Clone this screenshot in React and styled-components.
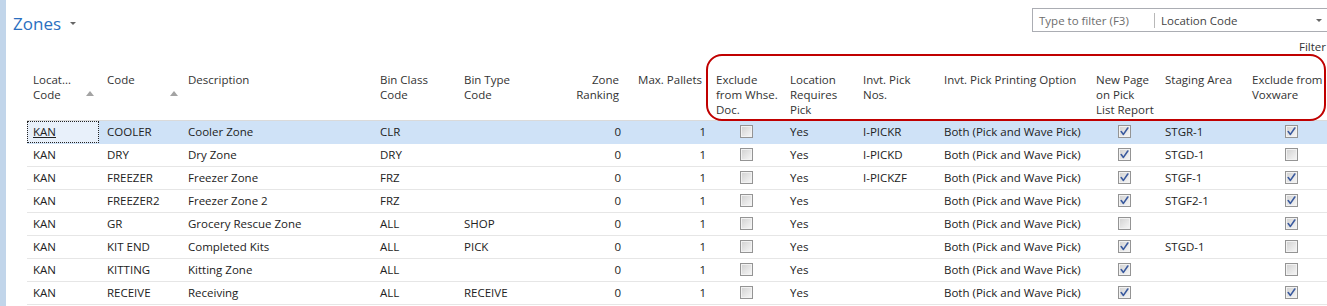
import React from "react";
import styled, { createGlobalStyle } from "styled-components";

const GlobalStyle = createGlobalStyle`
  html, body { margin: 0; padding: 0; background: #fff; }
  body { font-family: "Open Sans", "Noto Sans", Arial, sans-serif; overflow: hidden; }
  * { box-sizing: border-box; }
`;

const COLS = "74px 81px 192px 84px 102px 65px 85px 74px 73px 81px 152px 69px 87px 90px";

const Page = styled.div`
  display: flex;
  width: 1327px;
  height: 306px;
  overflow: hidden;
`;

const Strip = styled.div`
  width: 6px;
  flex: none;
  background: #c1d5ea;
`;

const Main = styled.div`
  position: relative;
  flex: 1;
  min-width: 0;
  overflow: hidden;
`;

const TopBar = styled.div`
  display: flex;
  align-items: flex-start;
  justify-content: space-between;
  height: 40px;
  padding-top: 8px;
`;

const Title = styled.div`
  display: flex;
  align-items: center;
  gap: 9px;
  padding-left: 7px;
  padding-top: 8px;
  height: 24px;
  font-size: 17px;
  color: #2a6fc0;
  line-height: 20px;
`;

const TitleCaret = styled.span`
  width: 0;
  height: 0;
  border-left: 3px solid transparent;
  border-right: 3px solid transparent;
  border-top: 3px solid #666;
  margin-top: -2px;
`;

const FilterBox = styled.div`
  display: flex;
  align-items: center;
  width: 306px;
  height: 24px;
  margin-right: -11px;
  border: 1px solid #abadb3;
  font-size: 11.5px;
`;

const FilterInput = styled.div`
  width: 122px;
  padding-left: 6px;
  color: #6d6d6d;
  border-right: 1px solid #b8b8b8;
  line-height: 15px;
`;

const FilterField = styled.div`
  flex: 1;
  display: flex;
  justify-content: space-between;
  align-items: center;
  padding-left: 6px;
  padding-right: 15px;
  color: #444;
`;

const DropCaret = styled.span`
  width: 0;
  height: 0;
  border-left: 3px solid transparent;
  border-right: 3px solid transparent;
  border-top: 3px solid #666;
`;

const FilterLabelRow = styled.div`
  display: flex;
  justify-content: flex-end;
  height: 14px;
  font-size: 11.5px;
  line-height: 14px;
  color: #333;
  padding-right: 1px;
`;

const Table = styled.div`
  padding-left: 21px;
`;

const HeaderRow = styled.div`
  display: grid;
  grid-template-columns: ${COLS};
  height: 67px;
  padding-top: 18px;
  border-bottom: 1px solid #dadada;
`;

const HeaderCell = styled.div`
  display: flex;
  justify-content: ${(p) => (p.$right ? "flex-end" : "space-between")};
  align-items: flex-start;
  padding: 0 ${(p) => p.$pr ?? 6}px 0 6px;
  font-size: 11.5px;
  line-height: 15px;
  color: #333;
  text-align: ${(p) => (p.$right ? "right" : "left")};
  white-space: pre;
`;

const SortArrow = styled.span`
  width: 0;
  height: 0;
  margin-top: 19px;
  border-left: 4.5px solid transparent;
  border-right: 4.5px solid transparent;
  border-bottom: 5px solid #a3a3a3;
`;

const Row = styled.div`
  display: grid;
  grid-template-columns: ${COLS};
  height: 23px;
  border-bottom: 1px solid ${(p) => (p.$selected ? "#cfe2f7" : "#e6e6e6")};
  background: ${(p) => (p.$selected ? "#cfe2f7" : "#fff")};
`;

const Cell = styled.div`
  display: flex;
  align-items: center;
  justify-content: ${(p) => (p.$right ? "flex-end" : p.$center ? "center" : "flex-start")};
  padding: 0 ${(p) => p.$pr ?? 6}px 1px 6px;
  font-size: 11.5px;
  color: #222;
  white-space: nowrap;
  overflow: hidden;
`;

const FocusCell = styled(Cell)`
  background: #e8f0fa;
  outline: 1px dotted #222;
  outline-offset: -1px;
  margin-right: 2px;
  text-decoration: underline;
`;

const Box = styled.span`
  display: inline-flex;
  align-items: center;
  justify-content: center;
  width: 13px;
  height: 13px;
  border: 1px solid #949494;
  background: linear-gradient(135deg, #d0d0d0 0%, #e6e6e6 55%, #f7f7f7 100%);
  box-shadow: inset 0 0 0 1px #f2f2f2;
  margin-left: ${(p) => p.$dx ?? 0}px;
`;

const Annotation = styled.div`
  position: absolute;
  left: 700px;
  top: 54px;
  width: 620px;
  height: 67px;
  border: 2px solid #c00000;
  border-radius: 16px;
  pointer-events: none;
`;

const Check = ({ on, dx }) => (
  <Box $dx={dx}>
    {on && (
      <svg width="9" height="9" viewBox="0 0 9 9">
        <path d="M1.2 4.6 L3.4 7.4 L7.8 1" fill="none" stroke="#3a5a9e" strokeWidth="1.6" strokeLinecap="round" strokeLinejoin="round" />
      </svg>
    )}
  </Box>
);

const both = "Both (Pick and Wave Pick)";
const rows = [
  ["COOLER", "Cooler Zone", "CLR", "", "I-PICKR", true, "STGR-1", true],
  ["DRY", "Dry Zone", "DRY", "", "I-PICKD", true, "STGD-1", false],
  ["FREEZER", "Freezer Zone", "FRZ", "", "I-PICKZF", true, "STGF-1", true],
  ["FREEZER2", "Freezer Zone 2", "FRZ", "", "", true, "STGF2-1", true],
  ["GR", "Grocery Rescue Zone", "ALL", "SHOP", "", false, "", true],
  ["KIT END", "Completed Kits", "ALL", "PICK", "", true, "STGD-1", false],
  ["KITTING", "Kitting Zone", "ALL", "", "", true, "", false],
  ["RECEIVE", "Receiving", "ALL", "RECEIVE", "", true, "", true],
];

export default function App() {
  return (
    <>
      <GlobalStyle />
      <Page>
        <Strip />
        <Main>
          <TopBar>
            <Title>
              Zones
              <TitleCaret />
            </Title>
            <FilterBox>
              <FilterInput>Type to filter (F3)</FilterInput>
              <FilterField>
                Location Code
                <DropCaret />
              </FilterField>
            </FilterBox>
          </TopBar>
          <FilterLabelRow>Filter</FilterLabelRow>
          <Table>
            <HeaderRow>
              <HeaderCell $pr={7}>
                <span>{"Locat...\nCode"}</span>
                <SortArrow />
              </HeaderCell>
              <HeaderCell $pr={4}>
                <span>Code</span>
                <SortArrow />
              </HeaderCell>
              <HeaderCell>Description</HeaderCell>
              <HeaderCell>{"Bin Class\nCode"}</HeaderCell>
              <HeaderCell>{"Bin Type\nCode"}</HeaderCell>
              <HeaderCell $right $pr={6}>{"Zone\nRanking"}</HeaderCell>
              <HeaderCell $right $pr={8}>Max. Pallets</HeaderCell>
              <HeaderCell>{"Exclude\nfrom Whse.\nDoc."}</HeaderCell>
              <HeaderCell>{"Location\nRequires\nPick"}</HeaderCell>
              <HeaderCell>{"Invt. Pick\nNos."}</HeaderCell>
              <HeaderCell>Invt. Pick Printing Option</HeaderCell>
              <HeaderCell>{"New Page\non Pick\nList Report"}</HeaderCell>
              <HeaderCell>Staging Area</HeaderCell>
              <HeaderCell>{"Exclude from\nVoxware"}</HeaderCell>
            </HeaderRow>
            {rows.map((r, i) => {
              const Loc = i === 0 ? FocusCell : Cell;
              return (
                <Row key={r[0]} $selected={i === 0}>
                  <Loc>KAN</Loc>
                  <Cell>{r[0]}</Cell>
                  <Cell>{r[1]}</Cell>
                  <Cell>{r[2]}</Cell>
                  <Cell>{r[3]}</Cell>
                  <Cell $right $pr={4}>0</Cell>
                  <Cell $right $pr={4}>1</Cell>
                  <Cell $center>
                    <Check on={false} dx={-1} />
                  </Cell>
                  <Cell>Yes</Cell>
                  <Cell>{r[4]}</Cell>
                  <Cell>{both}</Cell>
                  <Cell $center>
                    <Check on={r[5]} dx={0} />
                  </Cell>
                  <Cell>{r[6]}</Cell>
                  <Cell $center>
                    <Check on={r[7]} dx={0} />
                  </Cell>
                </Row>
              );
            })}
          </Table>
          <Annotation />
        </Main>
      </Page>
    </>
  );
}
